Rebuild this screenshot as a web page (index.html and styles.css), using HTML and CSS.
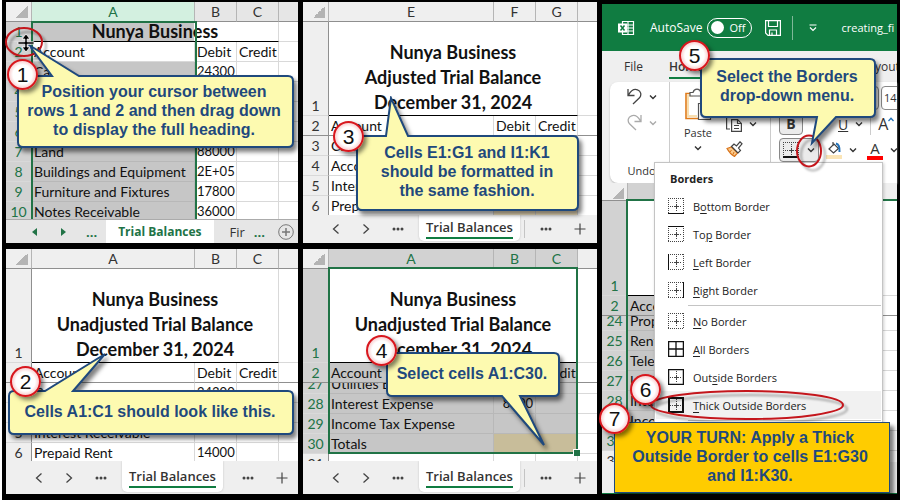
FILE: index.html
```html
<!DOCTYPE html>
<html lang="en">
<head>
  <meta charset="UTF-8" />
  <meta name="viewport" content="width=device-width, initial-scale=1.0" />
  <title>Trial Balances - Formatting Guide</title>
  <link rel="stylesheet" href="styles.css">
</head>
<body>
  <!-- Shared icons -->
  <svg class="defs" width="0" height="0" aria-hidden="true">
    <symbol id="chevron" viewBox="0 0 8 6"><path d="M1 1.5l3 3 3-3" fill="none" stroke="currentColor" stroke-width="1.4" /></symbol>
    <symbol id="prev" viewBox="0 0 8 12"><path d="M6.5 1.5L1.5 6l5 4.500" fill="none" stroke="#444" stroke-width="1.300" /></symbol>
    <symbol id="next" viewBox="0 0 8 12"><path d="M1.5 1.500L6.500 6l-5 4.500" fill="none" stroke="#444" stroke-width="1.300" /></symbol>
    <symbol id="dots" viewBox="0 0 12 4"><g fill="#444"><circle cx="2" cy="2" r="1.500" /><circle cx="6" cy="2" r="1.500" /><circle cx="10" cy="2" r="1.500" /></g></symbol>
    <symbol id="plus" viewBox="0 0 12 12"><path d="M6 .5v11M.5 6h11" stroke="#444" stroke-width="1.200" /></symbol>
    <symbol id="grid" viewBox="0 0 16 16"><path d="M0 .5h16M0 15.500h16M.5 0v16M15.500 0v16M8.500 2v12M2 8.500h12" fill="none" stroke="#444" stroke-dasharray="1 1" /><path d="M8.500 7v3M7 8.500h3" stroke="#444" /></symbol>
  </svg>

  <main class="board">

    <!-- Step 1: resize the heading row -->
    <section class="panel">
      <div class="sheet">
        <table>
          <colgroup><col class="c-num"><col><col class="c-amt"><col class="c-amt"><col class="c-rest"></colgroup>
          <tr class="letters old"><th class="corner"></th><th class="mint">A</th><th>B</th><th>C</th><th></th></tr>
          <tr><th class="sel">1</th><td class="title short" colspan="3">Nunya Business</td><td></td></tr>
          <tr><th class="sel">2</th><td>Account</td><td>Debit</td><td>Credit</td><td></td></tr>
          <tr><th class="sel">3</th><td class="gray">Cash</td><td class="num">24300</td><td></td><td></td></tr>
          <tr><th class="sel">4</th><td class="gray"></td><td></td><td></td><td></td></tr>
          <tr><th class="sel">5</th><td class="gray"></td><td></td><td></td><td></td></tr>
          <tr><th class="sel">6</th><td class="gray"></td><td></td><td></td><td></td></tr>
          <tr><th class="sel">7</th><td class="gray">Land</td><td class="num">88000</td><td></td><td></td></tr>
          <tr><th class="sel">8</th><td class="gray">Buildings and Equipment</td><td class="num">2E+05</td><td></td><td></td></tr>
          <tr><th class="sel">9</th><td class="gray">Furniture and Fixtures</td><td class="num">17800</td><td></td><td></td></tr>
          <tr><th class="sel">10</th><td class="gray">Notes Receivable</td><td class="num">36000</td><td></td><td></td></tr>
        </table>
        <div class="selection column"></div>
      </div>
      <div class="tabbar classic">
        <svg width="6" height="8" viewBox="0 0 6 8"><path d="M5 0v8L0 4z" fill="#217346" /></svg>
        <svg width="6" height="8" viewBox="0 0 6 8"><path d="M1 0v8l5-4z" fill="#217346" /></svg>
        <b>...</b>
        <button class="tab">Trial Balances</button>
        <span class="next-tab">Fir</span>
        <b>...</b>
        <svg width="16" height="16" viewBox="0 0 16 16"><circle cx="8" cy="8" r="7.300" fill="none" stroke="#777" /><path d="M8 4v8M4 8h8" stroke="#777" stroke-width="1.500" /></svg>
      </div>
      <svg class="ring ring-1" width="46" height="38" viewBox="0 0 46 38"><ellipse cx="20" cy="16" rx="18" ry="14" /></svg>
      <div class="callout callout-1">
        <svg width="286" height="114" viewBox="0 0 286 114"><path d="M13 1L36 32H7q-5 0-5 5v61q0 5 5 5h265q5 0 5-5V37q0-5-5-5H63z" /></svg>
        <p>Position your cursor between<br>rows 1 and 2 and then drag down<br>to display the full heading.</p>
      </div>
      <svg class="cursor" width="18" height="20" viewBox="0 0 18 20">
        <path d="M9 1l4 5h-2.800v2.800H17v2.400h-6.800V14H13l-4 5-4-5h2.800v-2.800H1V8.800h6.800V6H5z" fill="#000" stroke="#fff" stroke-width=".8" />
      </svg>
      <span class="badge badge-1">1</span>
    </section>

    <!-- Step 3: adjusted heading -->
    <section class="panel">
      <div class="sheet">
        <table>
          <colgroup><col class="c-num"><col><col class="c-amt"><col class="c-amt"><col class="c-rest"></colgroup>
          <tr class="letters"><th class="corner"></th><th>E</th><th>F</th><th>G</th><th></th></tr>
          <tr><th class="low">1</th><td class="title" colspan="3">Nunya Business<br>Adjusted Trial Balance<br>December 31, 2024</td><td></td></tr>
          <tr class="freeze"><th>2</th><td>Account</td><td>Debit</td><td>Credit</td><td></td></tr>
          <tr><th>3</th><td>Cash</td><td></td><td></td><td></td></tr>
          <tr><th>4</th><td>Accounts</td><td></td><td></td><td></td></tr>
          <tr><th>5</th><td>Interest</td><td></td><td></td><td></td></tr>
          <tr><th>6</th><td>Prepaid Rent</td><td class="tan"></td><td class="tan"></td><td></td></tr>
        </table>
      </div>
      <div class="tabbar">
        <svg width="8" height="12"><use href="#prev" /></svg>
        <svg width="8" height="12"><use href="#next" /></svg>
        <svg width="12" height="4"><use href="#dots" /></svg>
        <button class="tab"><span>Trial Balances</span></button>
        <i></i>
        <svg width="12" height="4"><use href="#dots" /></svg>
        <svg width="12" height="12"><use href="#plus" /></svg>
      </div>
      <div class="callout callout-3">
        <svg width="234" height="126" viewBox="0 0 234 126"><path d="M36 2L31 40H7q-5 0-5 5v64q0 5 5 5h211q5 0 5-5V45q0-5-5-5H53z" /></svg>
        <p>Cells E1:G1 and I1:K1<br>should be formatted in<br>the same fashion.</p>
      </div>
      <span class="badge badge-3">3</span>
    </section>

    <!-- Steps 5 to 7: the Borders menu -->
    <section class="panel app">
      <header class="titlebar">
        <svg width="17" height="16" viewBox="0 0 17 16"><path d="M4.500 1.500h11v13h-11zM10 1v14M5 5h11M5 8h11M5 11h11" fill="none" stroke="#fff" stroke-width="1.200" /><path d="M0 3.500h9v9H0z" fill="#fff" /><path d="M2.500 5.500l4 5M6.500 5.500l-4 5" stroke="#107c41" stroke-width="1.500" /></svg>
        <label for="autosave">AutoSave</label>
        <span class="switch"><input type="checkbox" id="autosave">Off</span>
        <svg width="16" height="16" viewBox="0 0 16 16"><path d="M.6 .6h14.800v14.800H3L.6 13zM3.500 1v5.500h9V1M4.500 15v-5h7v5M7 15v-2.500" fill="none" stroke="#fff" stroke-width="1.200" /></svg>
        <i></i>
        <svg width="8" height="8" viewBox="0 0 8 8"><path d="M.5 1h7M1 3.500l3 3 3-3" fill="none" stroke="#fff" stroke-width="1.200" /></svg>
        <span class="filename">creating_fi</span>
      </header>
      <nav class="ribbon-tabs">
        <a href="#file">File</a>
        <a href="#home" class="active">Home</a>
        <a href="#layout" class="layout">Page Layout</a>
      </nav>
      <div class="ribbon">
        <div class="group undo">
          <div class="row">
            <svg width="15" height="17" viewBox="0 0 15 17"><path d="M1 1v6.500h6.500M1.500 7C4 2.500 7.500.8 10.500 1.800c3.500 1.200 4.300 5.200 2 8L6 16" fill="none" stroke="#444" stroke-width="1.300" /></svg>
            <svg width="8" height="6"><use href="#chevron" /></svg>
          </div>
          <div class="row off">
            <svg width="15" height="17" viewBox="0 0 15 17"><path d="M14 1v6.500H7.500M13.500 7C11 2.500 7.500.8 4.500 1.800 1 3 .2 7 2.500 9.800L9 16" fill="none" stroke="currentColor" stroke-width="1.300" /></svg>
            <svg width="8" height="6"><use href="#chevron" /></svg>
          </div>
          <span class="caption">Undo</span>
        </div>
        <div class="group paste">
          <svg width="28" height="33" viewBox="0 0 28 33"><path d="M6 5.500H2v25h12M20 5.500h4V15" fill="none" stroke="#e07b1a" stroke-width="1.600" /><path d="M4 7.500h5M4 7v21h9" stroke="#f8dfb0" stroke-width="2" fill="none" /><path d="M6 8V4.500h3Q10 1.200 13 1.200t4 3.300h3V8zM14.500 15.500h12v16h-12z" fill="#fff" stroke="#555" stroke-width="1.200" /></svg>
          <span>Paste</span>
          <svg width="8" height="6"><use href="#chevron" /></svg>
        </div>
        <div class="group clip">
          <div class="row">
            <svg width="16" height="17" viewBox="0 0 16 17"><path d="M4 14H.6V.6H9M5.600 4.600h6l3.800 3.800v8H5.600zM11.500 5v3.500H15M8 10.500h5M8 13.500h5" fill="none" stroke="#444" stroke-width="1.200" /></svg>
            <svg width="8" height="6"><use href="#chevron" /></svg>
          </div>
          <svg width="17" height="16" viewBox="0 0 17 16"><path d="M1 7.500l4.500-1.500 6 6-3 3.500Q4 13 1 7.500z" fill="#f9c98b" stroke="#d9731a" stroke-width="1.200" /><path d="M4 11l1.500-2M7 13.500L8 11" stroke="#d9731a" /><path d="M5.500 5.500L8 3l2.500 2L14 .8l2 2L12.500 7l2 2.500-2.500 2.500z" fill="#fff" stroke="#444" stroke-width="1.200" /></svg>
        </div>
        <div class="group font">
          <div class="row">
            <span class="field name"><svg width="8" height="6"><use href="#chevron" /></svg></span>
            <span class="field size">14</span>
          </div>
          <div class="row letters-row">
            <button class="tool bold">B</button>
            <button class="tool under">U</button>
            <svg width="8" height="6"><use href="#chevron" /></svg>
            <i></i>
            <span class="grow">A<svg width="6" height="5" viewBox="0 0 6 5"><path d="M.5 4L3 1.200 5.500 4" fill="none" stroke="#2272b9" stroke-width="1.300" /></svg></span>
          </div>
          <div class="row">
            <button class="tool borders" aria-label="Borders">
              <svg width="16" height="16"><use href="#grid" /><path d="M0 15h16" stroke="#111" stroke-width="2" /></svg>
              <svg width="8" height="6"><use href="#chevron" /></svg>
            </button>
            <svg class="bucket" width="16" height="18" viewBox="0 0 16 18"><path d="M0 14h16v4H0z" fill="#fbe5b6" /><path d="M7 1v4M3 8l5-5 4.500 4.500L7.500 12z" fill="none" stroke="#444" stroke-width="1.200" /><path d="M10 2.500q4 1 3.500 8.500" fill="none" stroke="#2272b9" stroke-width="2" /></svg>
            <svg width="8" height="6"><use href="#chevron" /></svg>
            <span class="ink">A</span>
            <svg width="8" height="6"><use href="#chevron" /></svg>
          </div>
        </div>
      </div>
      <div class="sheet">
        <table>
          <colgroup><col class="c-num"><col><col class="c-wide"></colgroup>
          <tr class="letters"><th class="corner"></th><th class="sel"></th><th></th></tr>
          <tr><th class="sel low">1</th><td class="title"></td><td></td></tr>
          <tr class="freeze"><th class="sel">2</th><td class="gray">Account</td><td></td></tr>
          <tr class="partial"><th class="sel"><div>24</div></th><td class="gray"><div>Property</div></td><td></td></tr>
          <tr><th class="sel">25</th><td class="gray">Rent</td><td></td></tr>
          <tr><th class="sel">26</th><td class="gray">Telephone</td><td></td></tr>
          <tr><th class="sel">27</th><td class="gray">Utilities</td><td></td></tr>
          <tr><th class="sel">28</th><td class="gray">Interest</td><td></td></tr>
          <tr><th class="sel">29</th><td class="gray">Income</td><td></td></tr>
          <tr><th class="sel">30</th><td class="gray"></td><td></td></tr>
          <tr><th>31</th><td></td><td></td></tr>
        </table>
        <div class="selection range-open"></div>
      </div>
      <div class="tabbar bare"></div>

      <div class="menu" role="menu">
        <h2>Borders</h2>
        <button role="menuitem"><svg width="16" height="16"><use href="#grid" /><path d="M0 15.500h16" stroke="#111" /></svg><span>B<u>o</u>ttom Border</span></button>
        <button role="menuitem"><svg width="16" height="16"><use href="#grid" /><path d="M0 .5h16" stroke="#111" /></svg><span>To<u>p</u> Border</span></button>
        <button role="menuitem"><svg width="16" height="16"><use href="#grid" /><path d="M.5 0v16" stroke="#111" /></svg><span><u>L</u>eft Border</span></button>
        <button role="menuitem"><svg width="16" height="16"><use href="#grid" /><path d="M15.500 0v16" stroke="#111" /></svg><span><u>R</u>ight Border</span></button>
        <hr>
        <button role="menuitem"><svg width="16" height="16"><use href="#grid" /></svg><span><u>N</u>o Border</span></button>
        <button role="menuitem"><svg width="16" height="16"><path d="M.6 .6h14.800v14.800H.6zM8 0v16M0 8h16" fill="none" stroke="#111" stroke-width="1.300" /></svg><span><u>A</u>ll Borders</span></button>
        <button role="menuitem"><svg width="16" height="16"><use href="#grid" /><path d="M.6 .6h14.800v14.800H.6z" fill="none" stroke="#111" stroke-width="1.300" /></svg><span>Out<u>s</u>ide Borders</span></button>
        <button role="menuitem" class="hover"><svg width="16" height="16"><use href="#grid" /><path d="M1 1h14v14H1z" fill="none" stroke="#111" stroke-width="2" /></svg><span><u>T</u>hick Outside Borders</span></button>
        <hr>
      </div>

      <svg class="ring ring-5" width="36" height="44" viewBox="0 0 36 44"><ellipse cx="15" cy="18" rx="12" ry="15.500" /></svg>
      <svg class="ring ring-6" width="206" height="40" viewBox="0 0 206 40"><ellipse cx="98" cy="16" rx="96" ry="14" /></svg>
      <div class="callout callout-5">
        <svg width="186" height="96" viewBox="0 0 186 96"><path d="M113 86L118 60H7q-5 0-5-5V7q0-5 5-5h164q5 0 5 5v48q0 5-5 5H137z" /></svg>
        <p>Select the Borders<br>drop-down menu.</p>
      </div>
      <div class="your-turn">YOUR TURN: Apply a Thick<br>Outside Border to cells E1:G30<br>and I1:K30.</div>
      <span class="badge badge-5">5</span>
      <span class="badge badge-6">6</span>
      <span class="badge badge-7">7</span>
    </section>

    <!-- Step 2: unadjusted heading -->
    <section class="panel">
      <div class="sheet">
        <table>
          <colgroup><col class="c-num"><col><col class="c-amt"><col class="c-amt"><col class="c-rest"></colgroup>
          <tr class="letters"><th class="corner"></th><th>A</th><th>B</th><th>C</th><th></th></tr>
          <tr><th class="low">1</th><td class="title" colspan="3">Nunya Business<br>Unadjusted Trial Balance<br>December 31, 2024</td><td></td></tr>
          <tr class="freeze"><th>2</th><td>Account</td><td>Debit</td><td>Credit</td><td></td></tr>
          <tr><th>3</th><td>Cash</td><td class="num">24300</td><td></td><td></td></tr>
          <tr><th>4</th><td></td><td></td><td></td><td></td></tr>
          <tr><th>5</th><td>Interest Receivable</td><td></td><td></td><td></td></tr>
          <tr><th>6</th><td>Prepaid Rent</td><td class="num">14000</td><td></td><td></td></tr>
        </table>
      </div>
      <div class="tabbar tall">
        <svg width="8" height="12"><use href="#prev" /></svg>
        <svg width="8" height="12"><use href="#next" /></svg>
        <svg width="12" height="4"><use href="#dots" /></svg>
        <button class="tab"><span>Trial Balances</span></button>
        <i></i>
        <svg width="12" height="4"><use href="#dots" /></svg>
        <svg width="12" height="12"><use href="#plus" /></svg>
      </div>
      <div class="callout callout-2">
        <svg width="296" height="92" viewBox="0 0 296 92"><path d="M98 2L38 39H7q-5 0-5 5v33q0 5 5 5h274q5 0 5-5V44q0-5-5-5H66z" /></svg>
        <p>Cells A1:C1 should look like this.</p>
      </div>
      <span class="badge badge-2">2</span>
    </section>

    <!-- Step 4: select the range -->
    <section class="panel">
      <div class="sheet">
        <table>
          <colgroup><col class="c-num"><col><col class="c-amt"><col class="c-amt"><col class="c-rest"></colgroup>
          <tr class="letters"><th class="corner"></th><th class="sel">A</th><th class="sel">B</th><th class="sel">C</th><th></th></tr>
          <tr><th class="sel low">1</th><td class="title" colspan="3">Nunya Business<br>Unadjusted Trial Balance<br>December 31, 2024</td><td></td></tr>
          <tr class="freeze"><th class="sel">2</th><td class="gray">Account</td><td class="gray">Debit</td><td class="gray">Credit</td><td></td></tr>
          <tr class="partial"><th class="sel"><div>27</div></th><td class="gray"><div>Utilities Expense</div></td><td class="gray"></td><td class="gray"></td><td></td></tr>
          <tr><th class="sel">28</th><td class="gray">Interest Expense</td><td class="gray num">8000</td><td class="gray"></td><td></td></tr>
          <tr><th class="sel">29</th><td class="gray">Income Tax Expense</td><td class="gray"></td><td class="gray"></td><td></td></tr>
          <tr><th class="sel">30</th><td class="gray">Totals</td><td class="total"></td><td class="total"></td><td></td></tr>
          <tr><th>31</th><td></td><td></td><td></td><td></td></tr>
        </table>
        <div class="selection range"></div>
      </div>
      <div class="tabbar tall">
        <svg width="8" height="12"><use href="#prev" /></svg>
        <svg width="8" height="12"><use href="#next" /></svg>
        <svg width="12" height="4"><use href="#dots" /></svg>
        <button class="tab"><span>Trial Balances</span></button>
        <i></i>
        <svg width="12" height="4"><use href="#dots" /></svg>
        <svg width="12" height="12"><use href="#plus" /></svg>
      </div>
      <div class="callout callout-4">
        <svg width="184" height="104" viewBox="0 0 184 104"><path d="M7 2h162q5 0 5 5v33q0 5-5 5H135l24 49L117 45H7q-5 0-5-5V7q0-5 5-5z" /></svg>
        <p>Select cells A1:C30.</p>
      </div>
      <span class="badge badge-4">4</span>
    </section>

  </main>
</body>
</html>
```
FILE: styles.css
```css
* {
  box-sizing: border-box;
}

body {
  margin: 0;
  background: #000;
  border-left: 2px solid #fff;
  color: #111;
  font-family: Lato, "Liberation Sans", sans-serif;
  overflow: hidden;
}

.defs {
  position: absolute;
}

svg {
  display: block;
  flex: none;
}

button {
  border: none;
  background: none;
  padding: 0;
  font: inherit;
  color: inherit;
}

.board {
  display: grid;
  grid-template-columns: 292fr 294fr 295fr;
  grid-template-rows: 241fr 245fr;
  gap: 6px 5px;
  min-height: 100vh;
  padding: 2px 3px 6px 4px;
}

.panel {
  position: relative;
  display: flex;
  flex-direction: column;
  background: #fff;
  min-width: 0;
}

/* worksheet */
.sheet {
  position: relative;
  flex: 1 1 0;
  min-height: 0;
  overflow: hidden;
}

table {
  width: 100%;
  table-layout: fixed;
  border-collapse: separate;
  border-spacing: 0;
  font-size: 14px;
  line-height: 19px;
}

.c-num { width: 26px; }
.c-amt { width: 42px; }
.c-rest { width: 19px; }
.c-wide { width: 60px; }

th, td {
  height: 20px;
  padding: 0 2px;
  border-right: 1px solid #d9d9d9;
  border-bottom: 1px solid #d9d9d9;
  white-space: nowrap;
  overflow: hidden;
  text-align: left;
}

th {
  padding: 0;
  background: #efefef;
  border-right-color: #8f8f8f;
  font-weight: normal;
  text-align: center;
  color: #333;
}

tr > :last-child {
  border-right: none;
}

.letters th {
  border-right-color: #b5b5b5;
  border-bottom-color: #8f8f8f;
}

.old th { background: #e6e6e6; }

th.sel {
  background: #d2d2d2;
  color: #217346;
}

.letters .mint {
  background: #d3f0e0;
  color: #217346;
}

.letters .corner {
  background: linear-gradient(135deg, transparent 50%, #b4b4b4 50%) 10px 4px / 12px 12px no-repeat #efefef;
}

.low { vertical-align: bottom; }
.gray { background: #c6c6c6; border-color: #b8b8b8; }
.total { background: #c8bd9a; border-color: #c8bd9a; }
.tan { background: #fdeecb; }

.num {
  font-size: 13px;
  text-align: right;
}

.title {
  height: 94px;
  vertical-align: bottom;
  border-bottom-color: #000;
  font-size: 18px;
  font-weight: bold;
  line-height: 25px;
  text-align: center;
}

.title.short {
  height: 20px;
  line-height: 19px;
  background: linear-gradient(to left, #fff 84px, #c6c6c6 84px);
}

.freeze > * { border-bottom-color: #8f8f8f; }

.partial > * { height: 11px; }

.partial div {
  display: flex;
  align-items: flex-end;
  height: 10px;
  overflow: hidden;
}

.partial th div { justify-content: center; }

.selection {
  position: absolute;
  border: 2px solid #217346;
}

.column { left: 25px; right: 101px; top: 19px; bottom: -4px; }
.range { left: 25px; right: 19px; top: 18px; height: 187px; }
.range-open { left: 24px; right: -4px; top: 16px; bottom: -4px; border-width: 2px 0 0 2px; }

.range::after {
  content: "";
  position: absolute;
  right: -4px;
  bottom: -4px;
  width: 6px;
  height: 6px;
  background: #217346;
  border: 1px solid #fff;
  border-width: 1px 0 0 1px;
}

/* sheet tabs */
.tabbar {
  display: flex;
  align-items: center;
  height: 28px;
  padding-left: 18px;
  background: #efefef;
  font-family: "Open Sans", sans-serif;
  font-size: 13px;
  color: #333;
  white-space: nowrap;
  overflow: hidden;
}

.tabbar svg { margin: 0 11px; }
.tabbar.tall { height: 33px; }

.tabbar .tab {
  flex: none;
  align-self: stretch;
  margin: 0 0 2px 4px;
  padding: 0 7px;
  background: #fff;
  border-radius: 0 0 5px 5px;
  box-shadow: 0 0 2px #bbb;
  font-weight: 600;
}

.tabbar .tab span {
  display: block;
  border-bottom: 2px solid #107c41;
  line-height: 20px;
}

.tabbar i {
  width: 1px;
  height: 18px;
  margin: 0 4px;
  background: #c4c4c4;
}

.tabbar.classic {
  height: 24px;
  padding-left: 15px;
  background: #e6e6e6;
  border-top: 1px solid #ababab;
}

.classic .tab {
  margin: 0;
  padding: 0 12px;
  border-radius: 0;
  box-shadow: none;
  font-size: 12px;
  font-weight: bold;
  color: #217346;
}

.classic b {
  margin: 0 9px;
  color: #217346;
}

.classic svg:last-child { margin: 0 4px; }
.next-tab { margin-left: 16px; }
.bare { height: 32px; border-bottom: 1px solid #107c41; }

/* application window */
.app {
  grid-column: 3;
  grid-row: 1 / 3;
  margin-top: 2px;
  background: #efefef;
  font-family: "Open Sans", sans-serif;
  font-size: 11px;
}

.app .sheet { background: #fff; }
.app table { font-family: Lato, sans-serif; }
.app .letters th { height: 18px; }
.app .title { height: 95px; }

.app .partial > * { height: 15px; }
.app .partial div { height: 14px; }

.titlebar {
  display: flex;
  align-items: center;
  height: 47px;
  padding-left: 16px;
  background: #107c41;
  color: #fff;
  white-space: nowrap;
  overflow: hidden;
}

.titlebar label {
  margin: 0 5px 0 15px;
  font-size: 12px;
}

.switch {
  display: flex;
  flex: none;
  align-items: center;
  gap: 5px;
  width: 45px;
  height: 20px;
  margin-right: 13px;
  padding-left: 3px;
  border: 1px solid #fff;
  border-radius: 10px;
}

.switch input {
  appearance: none;
  width: 13px;
  height: 13px;
  margin: 0;
  border-radius: 50%;
  background: #fff;
}

.titlebar i {
  width: 1px;
  height: 24px;
  margin: 0 16px 0 11px;
  background: #7fb899;
}

.filename { margin-left: 24px; }

.ribbon-tabs {
  display: flex;
  height: 31px;
  padding: 6px 0 0 22px;
  overflow: hidden;
  font-size: 12px;
  line-height: 20px;
  white-space: nowrap;
}

.ribbon-tabs a {
  margin-right: 26px;
  color: #333;
  text-decoration: none;
  height: 22px;
}

.ribbon-tabs .active {
  border-bottom: 2px solid #107c41;
  font-weight: 600;
}

.ribbon-tabs .layout {
  margin: 0 0 0 102px;
}

.ribbon {
  display: flex;
  height: 101px;
  margin-left: 8px;
  background: #fff;
  border-radius: 8px 0 0 8px;
  box-shadow: 0 1px 2px #bbb;
  color: #333;
  overflow: hidden;
}

.group {
  display: flex;
  flex: none;
  flex-direction: column;
  align-items: center;
  padding-top: 6px;
}

.row {
  display: flex;
  align-items: center;
  gap: 7px;
}

.undo {
  width: 60px;
  gap: 9px;
  padding-left: 4px;
  border-right: 1px solid #ccc;
}

.off { color: #aaa; }
.caption { margin-top: 23px; }

.paste {
  width: 56px;
  gap: 2px;
}

.paste > span { line-height: 20px; }

.clip {
  width: 44px;
  gap: 9px;
  align-items: flex-start;
  padding-top: 33px;
}

.font {
  gap: 3px;
  padding: 4px 0 0 8px;
  align-items: flex-start;
  border-left: 1px solid #ccc;
}

.field {
  height: 24px;
  border: 1px solid #888;
  border-radius: 4px;
  line-height: 22px;
}

.name { width: 100px; padding: 8px 0 0 86px; }
.font .row:first-child { gap: 2px; }
.size { width: 40px; padding-left: 2px; }

.tool {
  height: 22px;
  font-size: 14px;
}

.letters-row i {
  width: 1px;
  height: 22px;
  background: #ccc;
}

.bold {
  width: 24px;
  background: #ebebeb;
  border: 1px solid #888;
  border-radius: 4px;
  font-weight: bold;
  line-height: 18px;
}

.under {
  margin-left: 28px;
  text-decoration: underline;
}

.grow {
  display: flex;
  font-size: 16px;
  line-height: 22px;
}

.grow svg { margin-top: 4px; }

.borders {
  display: flex;
  align-items: center;
  gap: 8px;
  width: 40px;
  height: 24px;
  padding-left: 3px;
  background: #ebebeb;
  border: 1px solid #888;
  border-radius: 4px;
}

.ink {
  width: 16px;
  margin-left: 3px;
  border-bottom: 4px solid #f00;
  font-size: 15px;
  line-height: 15px;
  text-align: center;
}

/* borders menu */
.menu {
  position: absolute;
  left: 52px;
  top: 158px;
  bottom: 1px;
  width: 229px;
  padding: 3px 1px;
  background: #fff;
  border: 1px solid #c4c4c4;
  box-shadow: 1px 1px 3px rgba(0, 0, 0, 0.2);
  color: #222;
}

.menu h2 {
  margin: 0;
  padding: 0 14px;
  font-size: 11px;
  line-height: 26px;
}

.menu button {
  display: flex;
  align-items: center;
  gap: 9px;
  width: 100%;
  height: 28px;
  padding-left: 12px;
}

.menu .hover { background: #f1f1f1; }

.menu hr {
  margin: 1px 0 1px 32px;
  border: none;
  border-top: 1px solid #c4c4c4;
}

.menu u { text-underline-offset: 2px; }

/* annotations */
.callout {
  position: absolute;
  z-index: 2;
  color: #1f497d;
  font: bold 16px/19px "Liberation Sans", sans-serif;
  text-align: center;
}

.callout svg {
  filter: drop-shadow(3px 4px 2px rgba(0, 0, 0, 0.5));
}

.callout path {
  fill: #fdfab0;
  stroke: #1f497d;
  stroke-width: 2;
}

.callout p {
  position: absolute;
  left: 0;
  right: 10px;
  margin: 0;
  white-space: nowrap;
}

.callout-1 { left: 10px; top: 42px; }
.callout-1 p { top: 38px; }
.callout-2 { left: 1px; top: 103px; }
.callout-2 p { top: 50px; }
.callout-3 { left: 52px; top: 94px; }
.callout-3 p { top: 47px; }
.callout-4 { left: 82px; top: 102px; }
.callout-4 p { top: 13px; }
.callout-5 { left: 97px; top: 53px; }
.callout-5 p { top: 10px; }

.your-turn {
  position: absolute;
  z-index: 2;
  left: 12px;
  right: 7px;
  bottom: 1px;
  padding: 5px 4px 7px 0;
  background: #fc0;
  border: 1px solid #1f497d;
  box-shadow: 4px 4px 4px rgba(0, 0, 0, 0.5);
  color: #1f497d;
  font: bold 16px/19px "Liberation Sans", sans-serif;
  text-align: center;
  white-space: nowrap;
}

.badge {
  position: absolute;
  z-index: 3;
  width: 31px;
  height: 31px;
  border: 2px solid #d8171e;
  border-radius: 50%;
  background: radial-gradient(circle, #fff 50%, #f08f93 100%);
  box-shadow: 3px 3px 4px rgba(0, 0, 0, 0.5);
  color: #111;
  font: 21px/27px "Liberation Sans", sans-serif;
  text-align: center;
}

.badge-1 { left: 1px; top: 57px; }
.badge-2 { left: 4px; top: 117px; }
.badge-3 { left: 30px; top: 119px; }
.badge-4 { left: 63px; top: 86px; }
.badge-5 { left: 77px; top: 36px; }
.badge-6 { left: 28px; top: 370px; }
.badge-7 { left: -3px; top: 399px; }

.ring {
  position: absolute;
  z-index: 1;
  filter: drop-shadow(4px 4px 1px rgba(0, 0, 0, 0.3));
}

.ring ellipse {
  fill: none;
  stroke: #c4161c;
  stroke-width: 2;
}

.ring-1 { left: -2px; top: 24px; }
.ring-5 { left: 192px; top: 129px; }
.ring-6 { left: 47px; top: 385px; }

.cursor {
  position: absolute;
  z-index: 3;
  left: 11px;
  top: 31px;
}
```
